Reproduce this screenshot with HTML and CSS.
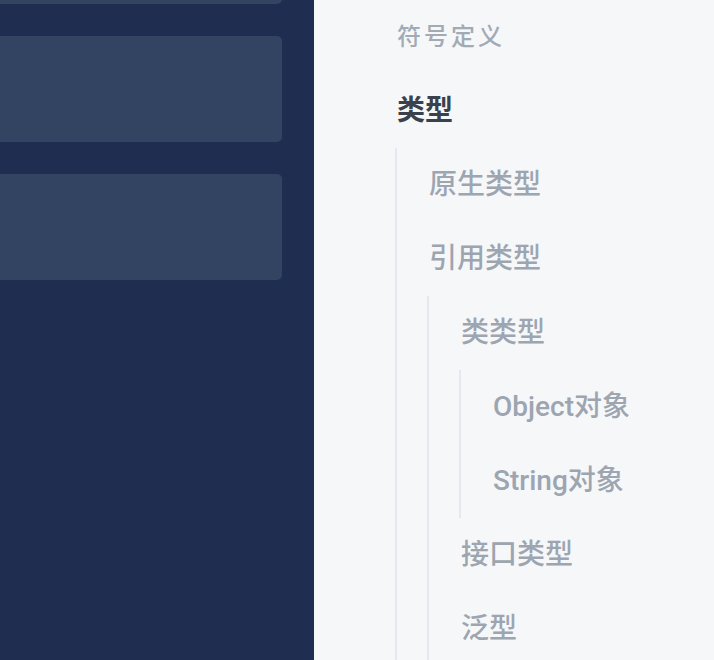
FILE: index.html
```html
<!DOCTYPE html>
<html lang="zh-CN">
<head>
<meta charset="utf-8">
<title>类型</title>
<link rel="stylesheet" href="styles.css">
</head>
<body>
<div class="layout">
  <aside class="sidebar">
    <div class="cards">
      <div class="card"></div>
      <div class="card"></div>
      <div class="card"></div>
    </div>
  </aside>
  <nav class="toc">
    <ul class="toc-list root">
      <li class="toc-item small">符号定义</li>
      <li class="toc-item active">类型
        <ul class="toc-list">
          <li class="toc-item">原生类型</li>
          <li class="toc-item">引用类型
            <ul class="toc-list">
              <li class="toc-item">类类型
                <ul class="toc-list">
                  <li class="toc-item">Object对象</li>
                  <li class="toc-item">String对象</li>
                </ul>
              </li>
              <li class="toc-item">接口类型</li>
              <li class="toc-item">泛型</li>
            </ul>
          </li>
        </ul>
      </li>
    </ul>
  </nav>
</div>
</body>
</html>
```
FILE: styles.css
```css
* { box-sizing: border-box; }
html, body {
  margin: 0;
  padding: 0;
  height: 100%;
  overflow: hidden;
}
body {
  font-family: Roboto, "Noto Sans CJK SC", sans-serif;
  background: #f6f7f9;
}
.layout {
  display: flex;
  height: 660px;
}
.sidebar {
  width: 314px;
  flex: none;
  background: #1e2d50;
  padding-right: 32px;
  overflow: hidden;
}
.cards {
  display: flex;
  flex-direction: column;
  gap: 32px;
  margin-top: -102px;
  margin-left: -12px;
}
.card {
  height: 106px;
  background: #334463;
  border-radius: 5px;
}
.toc {
  flex: 1;
  padding-left: 83px;
  overflow: hidden;
}
.toc-list {
  list-style: none;
  margin: 0;
  padding: 0;
}
.toc-list .toc-list {
  border-left: 2px solid #e4e9ef;
  padding-left: 32px;
  margin-left: -2px;
  padding-bottom: 20px;
}
.toc-list .toc-list .toc-list {
  padding-bottom: 0;
}
.toc-item {
  line-height: 74px;
  font-size: 28px;
  font-weight: 500;
  color: #9ca5b0;
  white-space: nowrap;
}
.toc-item.small {
  font-size: 24px;
  letter-spacing: 3px;
  color: #a2aab4;
}
.toc-item.active {
  font-weight: 600;
  color: #3a414b;
}
.toc-item.active .toc-item {
  font-weight: 500;
  color: #9ca5b0;
}
```
